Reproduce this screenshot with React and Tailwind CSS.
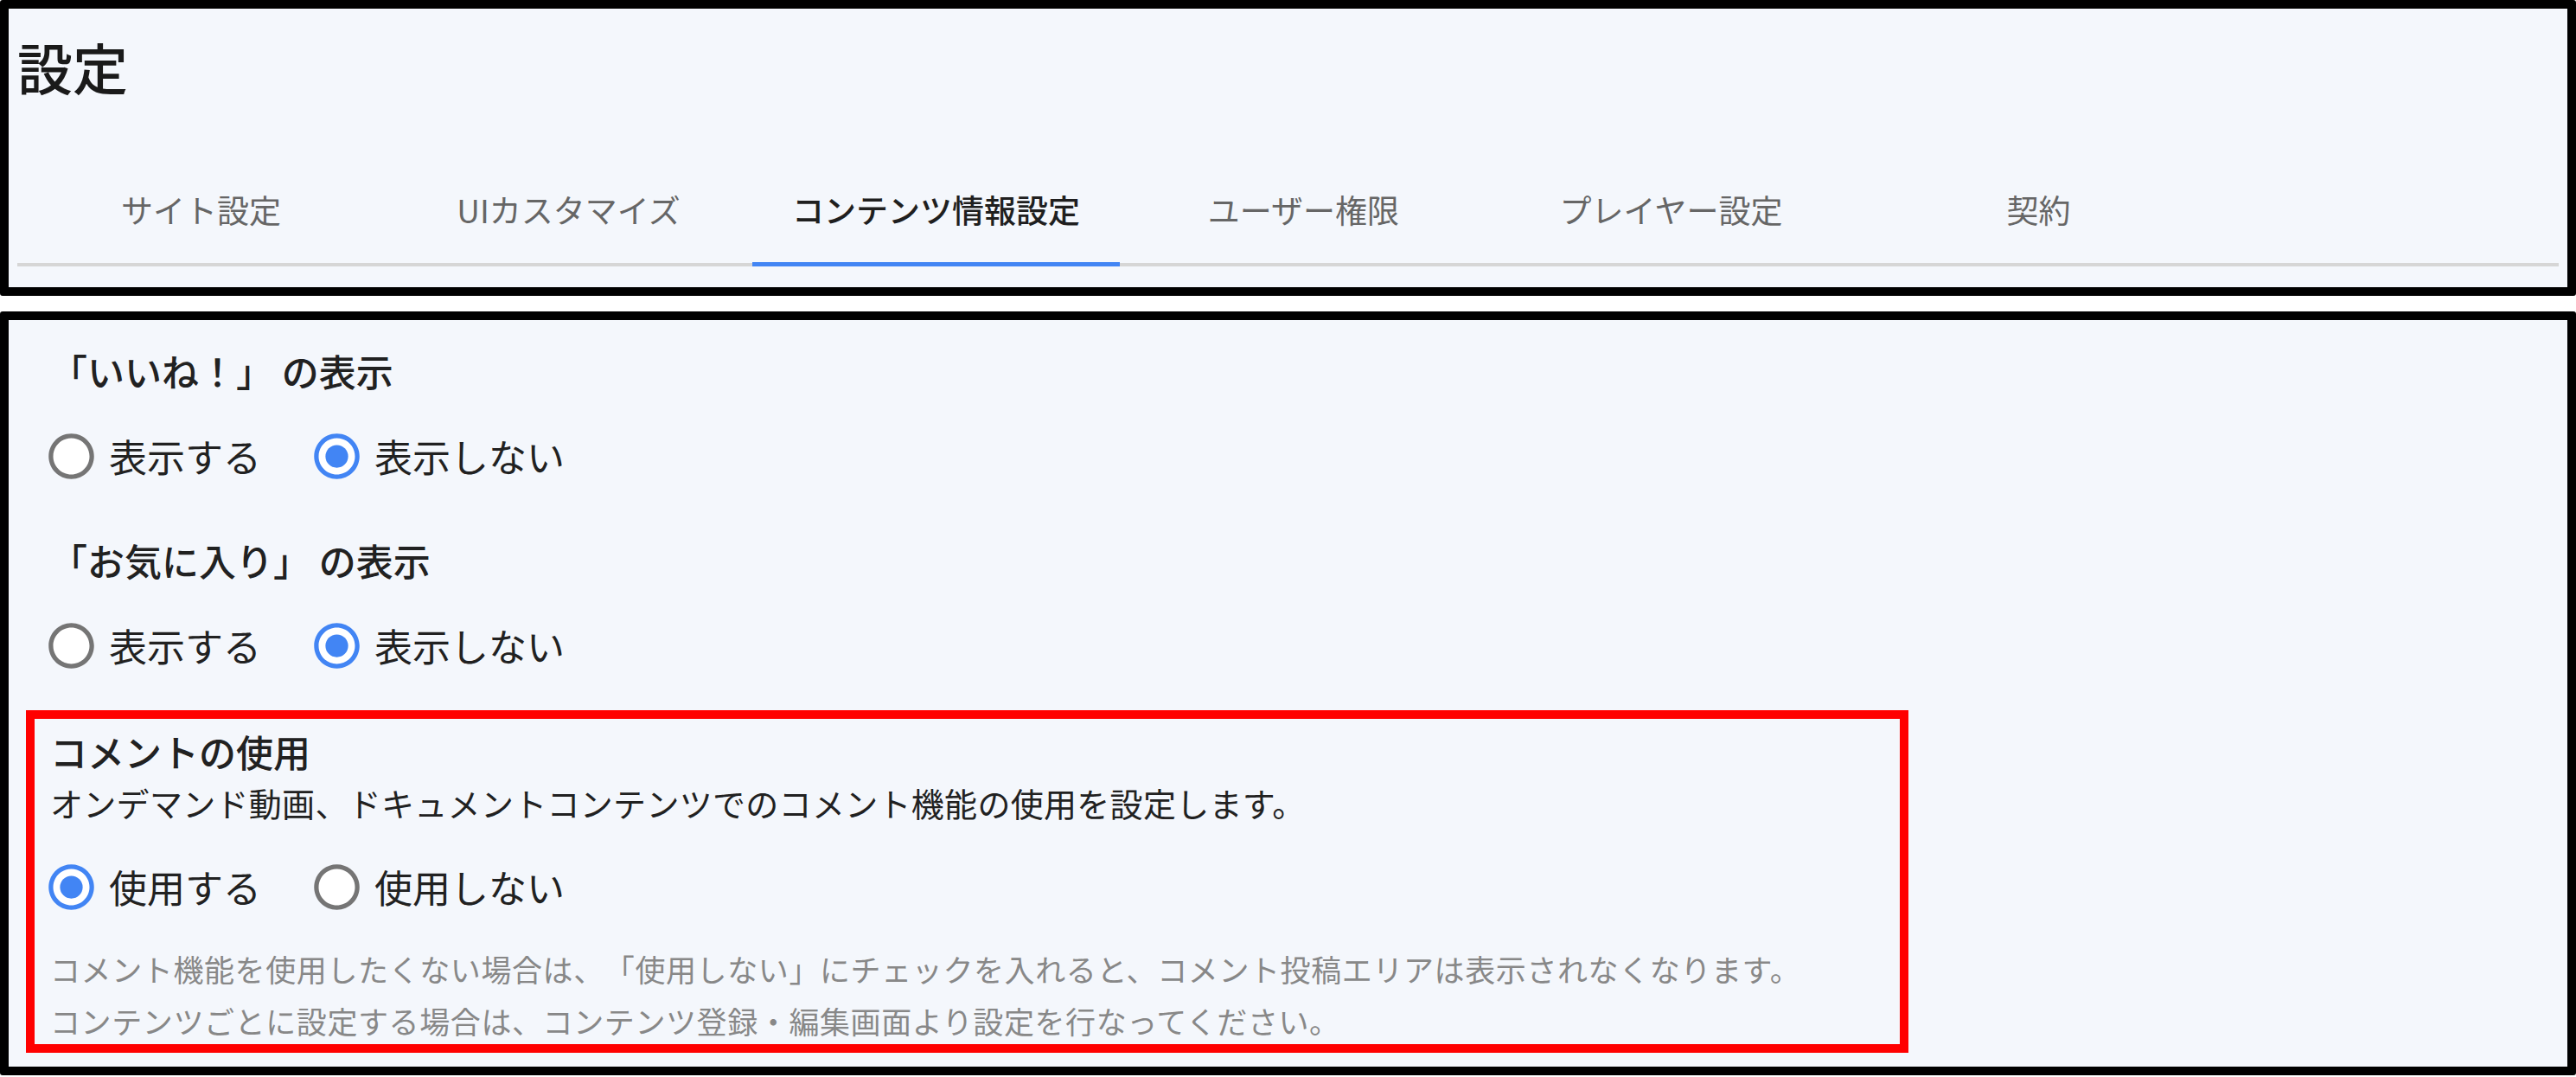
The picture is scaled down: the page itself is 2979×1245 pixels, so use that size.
import React from "react";

const RING =
  "M12 2C6.48 2 2 6.48 2 12s4.48 10 10 10 10-4.48 10-10S17.52 2 12 2zm0 18c-4.42 0-8-3.58-8-8s3.58-8 8-8 8 3.58 8 8-3.58 8-8 8z";

function Radio({ checked }) {
  return (
    <svg viewBox="0 0 24 24" className="w-[63px] h-[63px] shrink-0 -ml-[7px]">
      <circle cx="12" cy="12" r="9" fill="#ffffff" />
      <path fill={checked ? "#4285f4" : "#757575"} d={RING} />
      {checked && <circle cx="12" cy="12" r="5" fill="#4285f4" />}
    </svg>
  );
}

function RadioItem({ checked, label }) {
  return (
    <label className="flex items-center gap-[12px]">
      <Radio checked={checked} />
      <span className="text-[44px] leading-[63px] text-[#212121]">{label}</span>
    </label>
  );
}

function RadioRow({ items }) {
  return (
    <div className="flex items-center h-[110px] gap-[63px]">
      {items.map((it) => (
        <RadioItem key={it.label} checked={it.checked} label={it.label} />
      ))}
    </div>
  );
}

const TABS = [
  "サイト設定",
  "UIカスタマイズ",
  "コンテンツ情報設定",
  "ユーザー権限",
  "プレイヤー設定",
  "契約",
];

export default function App() {
  return (
    <div className="w-[2979px] h-[1245px] bg-white overflow-hidden font-['Noto_Sans_CJK_JP','Noto_Sans',sans-serif] [text-spacing-trim:space-all]">
      {/* header box */}
      <div className="h-[342px] border-[10px] border-black rounded-[3px] bg-[#f4f7fc] px-[10px] pt-[28px] pb-[24px]">
        <h1 className="text-[64px] leading-[76px] font-medium text-[#1a1a1a]">設定</h1>
        <div className="mt-[69px] flex border-b-4 border-[#d6d6d6]">
          {TABS.map((t, i) => {
            const active = i === 2;
            return (
              <div
                key={t}
                className={
                  active
                    ? "w-[425px] h-[125px] -mb-1 border-b-[5px] border-[#4285f4] flex items-center justify-center text-[37px] font-medium text-[#1f1f1f]"
                    : "w-[425px] h-[125px] -mb-1 border-b-[5px] border-transparent flex items-center justify-center text-[37px] text-[#666666]"
                }
              >
                {t}
              </div>
            );
          })}
        </div>
      </div>

      {/* content box */}
      <div className="mt-[18px] h-[883px] border-[10px] border-black rounded-[3px] bg-[#f4f7fc] pl-[20px] pt-[27px]">
        <div className="pl-[28px]">
          <div className="text-[43px] leading-[63px] font-medium text-[#212121]">「いいね！」 の表示</div>
          <div className="mt-[12px]">
            <RadioRow
              items={[
                { label: "表示する", checked: false },
                { label: "表示しない", checked: true },
              ]}
            />
          </div>
        </div>

        <div className="pl-[28px] mt-[34px]">
          <div className="text-[43px] leading-[63px] font-medium text-[#212121]">「お気に入り」 の表示</div>
          <div className="mt-[12px]">
            <RadioRow
              items={[
                { label: "表示する", checked: false },
                { label: "表示しない", checked: true },
              ]}
            />
          </div>
        </div>

        <div className="mt-[20px] w-[2177px] h-[396px] border-[10px] border-[#ff0000] pl-[18px] pt-[6px]">
          <div className="text-[43px] leading-[63px] font-medium text-[#212121]">コメントの使用</div>
          <div className="text-[38px] leading-[55px] tracking-[0.3px] text-[#212121]">
            オンデマンド動画、ドキュメントコンテンツでのコメント機能の使用を設定します。
          </div>
          <div className="mt-[15px]">
            <RadioRow
              items={[
                { label: "使用する", checked: true },
                { label: "使用しない", checked: false },
              ]}
            />
          </div>
          <div className="mt-[10px] text-[35px] leading-[60px] tracking-[0.6px] text-[#888888]">
            <p>コメント機能を使用したくない場合は、「使用しない」にチェックを入れると、コメント投稿エリアは表示されなくなります。</p>
            <p>コンテンツごとに設定する場合は、コンテンツ登録・編集画面より設定を行なってください。</p>
          </div>
        </div>
      </div>
    </div>
  );
}
